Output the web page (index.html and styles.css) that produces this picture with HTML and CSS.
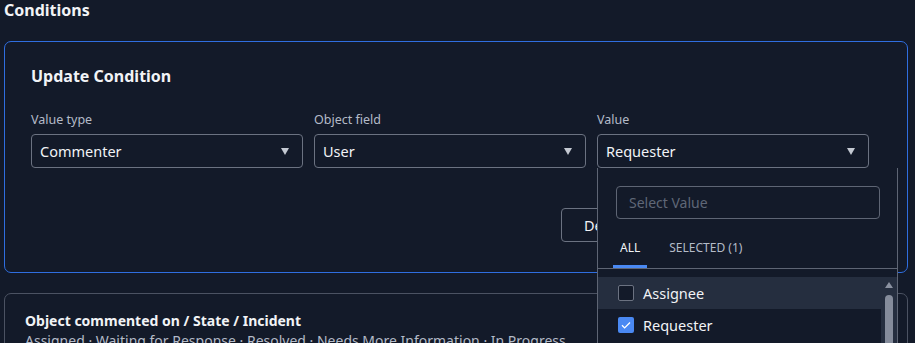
FILE: index.html
```html
<!DOCTYPE html>
<html lang="en">
<head>
    <meta charset="UTF-8">
    <meta name="viewport" content="width=device-width, initial-scale=1.0">
    <title>Conditions</title>
    <link rel="stylesheet" href="styles.css">
</head>
<body>
    <h2 class="page-title">Conditions</h2>

    <!-- condition being edited -->
    <section class="card card-active">
        <h3 class="card-title">Update Condition</h3>

        <div class="fields">
            <div class="field">
                <label>Value type</label>
                <div class="select">
                    <span>Commenter</span>
                    <span class="caret"></span>
                </div>
            </div>
            <div class="field">
                <label>Object field</label>
                <div class="select">
                    <span>User</span>
                    <span class="caret"></span>
                </div>
            </div>
            <div class="field field-open">
                <label>Value</label>
                <div class="select">
                    <span>Requester</span>
                    <span class="caret"></span>
                </div>

                <!-- value dropdown -->
                <div class="dropdown">
                    <div class="dropdown-search">
                        <input type="text" placeholder="Select Value">
                    </div>
                    <div class="tabs">
                        <span class="tab active">ALL</span>
                        <span class="tab">SELECTED (1)</span>
                    </div>
                    <div class="options">
                        <ul class="option-list">
                            <li class="option hover">
                                <span class="check"></span>
                                Assignee
                            </li>
                            <li class="option">
                                <span class="check checked">
                                    <svg viewBox="0 0 16 16" width="16" height="16"><path d="M4 8.3l2.6 2.6L12 5.5" fill="none" stroke="#fff" stroke-width="1.3"/></svg>
                                </span>
                                Requester
                            </li>
                            <li class="option">
                                <span class="check"></span>
                                Watcher
                            </li>
                        </ul>
                        <div class="scrollbar">
                            <span class="scroll-up"></span>
                            <span class="scroll-thumb"></span>
                        </div>
                    </div>
                </div>
            </div>
        </div>

        <div class="actions">
            <button class="btn">Delete</button>
            <button class="btn">Save</button>
        </div>
    </section>

    <!-- existing condition -->
    <section class="card">
        <h4 class="summary-title">Object commented on / State / Incident</h4>
        <p class="summary-text">Assigned · Waiting for Response · Resolved · Needs More Information · In Progress</p>
    </section>
</body>
</html>
```

FILE: styles.css
```css
* {
    margin: 0;
    padding: 0;
    box-sizing: border-box;
}

body {
    font-family: "Noto Sans", "Open Sans", sans-serif;
    background-color: #131a29;
    color: #f1f3f6;
    padding: 0 7px 0 4px;
    overflow: hidden;
}

.page-title {
    font-size: 16px;
    font-weight: 700;
    line-height: 20px;
    margin-bottom: 21px;
}

/* cards */
.card {
    border: 1px solid #4b5262;
    border-radius: 7px;
    padding: 17px 20px;
}

.card-active {
    border-color: #2f6ee0;
    padding: 23px 26px 30px;
    margin-bottom: 20px;
}

.card-title {
    font-size: 16px;
    font-weight: 700;
    line-height: 22px;
    margin-bottom: 24px;
}

.fields {
    display: grid;
    grid-template-columns: repeat(3, 272px);
    gap: 11px;
}

.field {
    display: flex;
    flex-direction: column;
}

.field label {
    font-size: 12.5px;
    color: #b4bbc8;
    line-height: 18px;
    margin-bottom: 5px;
}

.select {
    height: 34px;
    border: 1px solid #6b7281;
    border-radius: 4px;
    display: flex;
    align-items: center;
    justify-content: space-between;
    padding: 0 13px 0 8px;
    font-size: 14.5px;
}

.caret {
    width: 0;
    height: 0;
    border-left: 4.5px solid transparent;
    border-right: 4.5px solid transparent;
    border-top: 7px solid #c4c9d2;
}

.actions {
    display: flex;
    justify-content: flex-end;
    gap: 10px;
    width: 838px;
    margin-top: 40px;
}

.btn {
    height: 34px;
    min-width: 140px;
    padding: 0 22px;
    border: 1px solid #6b7281;
    border-radius: 4px;
    background: transparent;
    color: #f1f3f6;
    font-family: inherit;
    font-size: 14.5px;
    text-align: left;
}

.btn + .btn {
    min-width: 158px;
}

/* dropdown */
.field-open {
    position: relative;
}

.dropdown {
    position: absolute;
    top: 100%;
    left: 0;
    width: 301px;
    height: 220px;
    background-color: #131a29;
    border: 1px solid #5e6574;
    border-top: none;
    z-index: 10;
}

.dropdown-search {
    padding: 18px 18px 0;
}

.dropdown-search input {
    width: 264px;
    height: 33px;
    border: 1px solid #5e6574;
    border-radius: 4px;
    background: transparent;
    padding: 0 12px;
    font-family: inherit;
    font-size: 14px;
    color: #f1f3f6;
}

.dropdown-search input::placeholder {
    color: #5f6777;
}

.tabs {
    display: flex;
    padding: 0 15px;
    margin-top: 16px;
    border-bottom: 1px solid #5e6574;
}

.tab {
    font-size: 12px;
    color: #b4bbc8;
    line-height: 16px;
    padding: 5px 7px 9px;
    margin-right: 15px;
    border-bottom: 3px solid transparent;
}

.tab.active {
    color: #f1f3f6;
    border-bottom-color: #4a89f3;
}

.options {
    display: flex;
    margin-top: 8px;
}

.option-list {
    list-style: none;
    flex: 1;
}

.option {
    height: 32px;
    display: flex;
    align-items: center;
    gap: 9px;
    padding-left: 20px;
    font-size: 14.5px;
}

.option.hover {
    background-color: #252e3f;
}

.check {
    width: 16px;
    height: 16px;
    border: 1px solid #6b7281;
    border-radius: 2px;
    background-color: #131a29;
}

.check.checked {
    border: none;
    background-color: #4a89f3;
}

.check svg {
    display: block;
}

.scrollbar {
    width: 16px;
    background-color: #252e3f;
    display: flex;
    flex-direction: column;
    align-items: center;
}

.scroll-up {
    width: 0;
    height: 0;
    margin-top: 5px;
    border-left: 4.5px solid transparent;
    border-right: 4.5px solid transparent;
    border-bottom: 6px solid #8b92a1;
}

.scroll-thumb {
    width: 8px;
    height: 120px;
    margin-top: 7px;
    border-radius: 4px;
    background-color: #858c9b;
}

/* saved conditions */
.summary-title {
    font-size: 14px;
    font-weight: 700;
    line-height: 20px;
}

.summary-text {
    font-size: 14px;
    color: #b4bbc8;
    line-height: 20px;
}
```
